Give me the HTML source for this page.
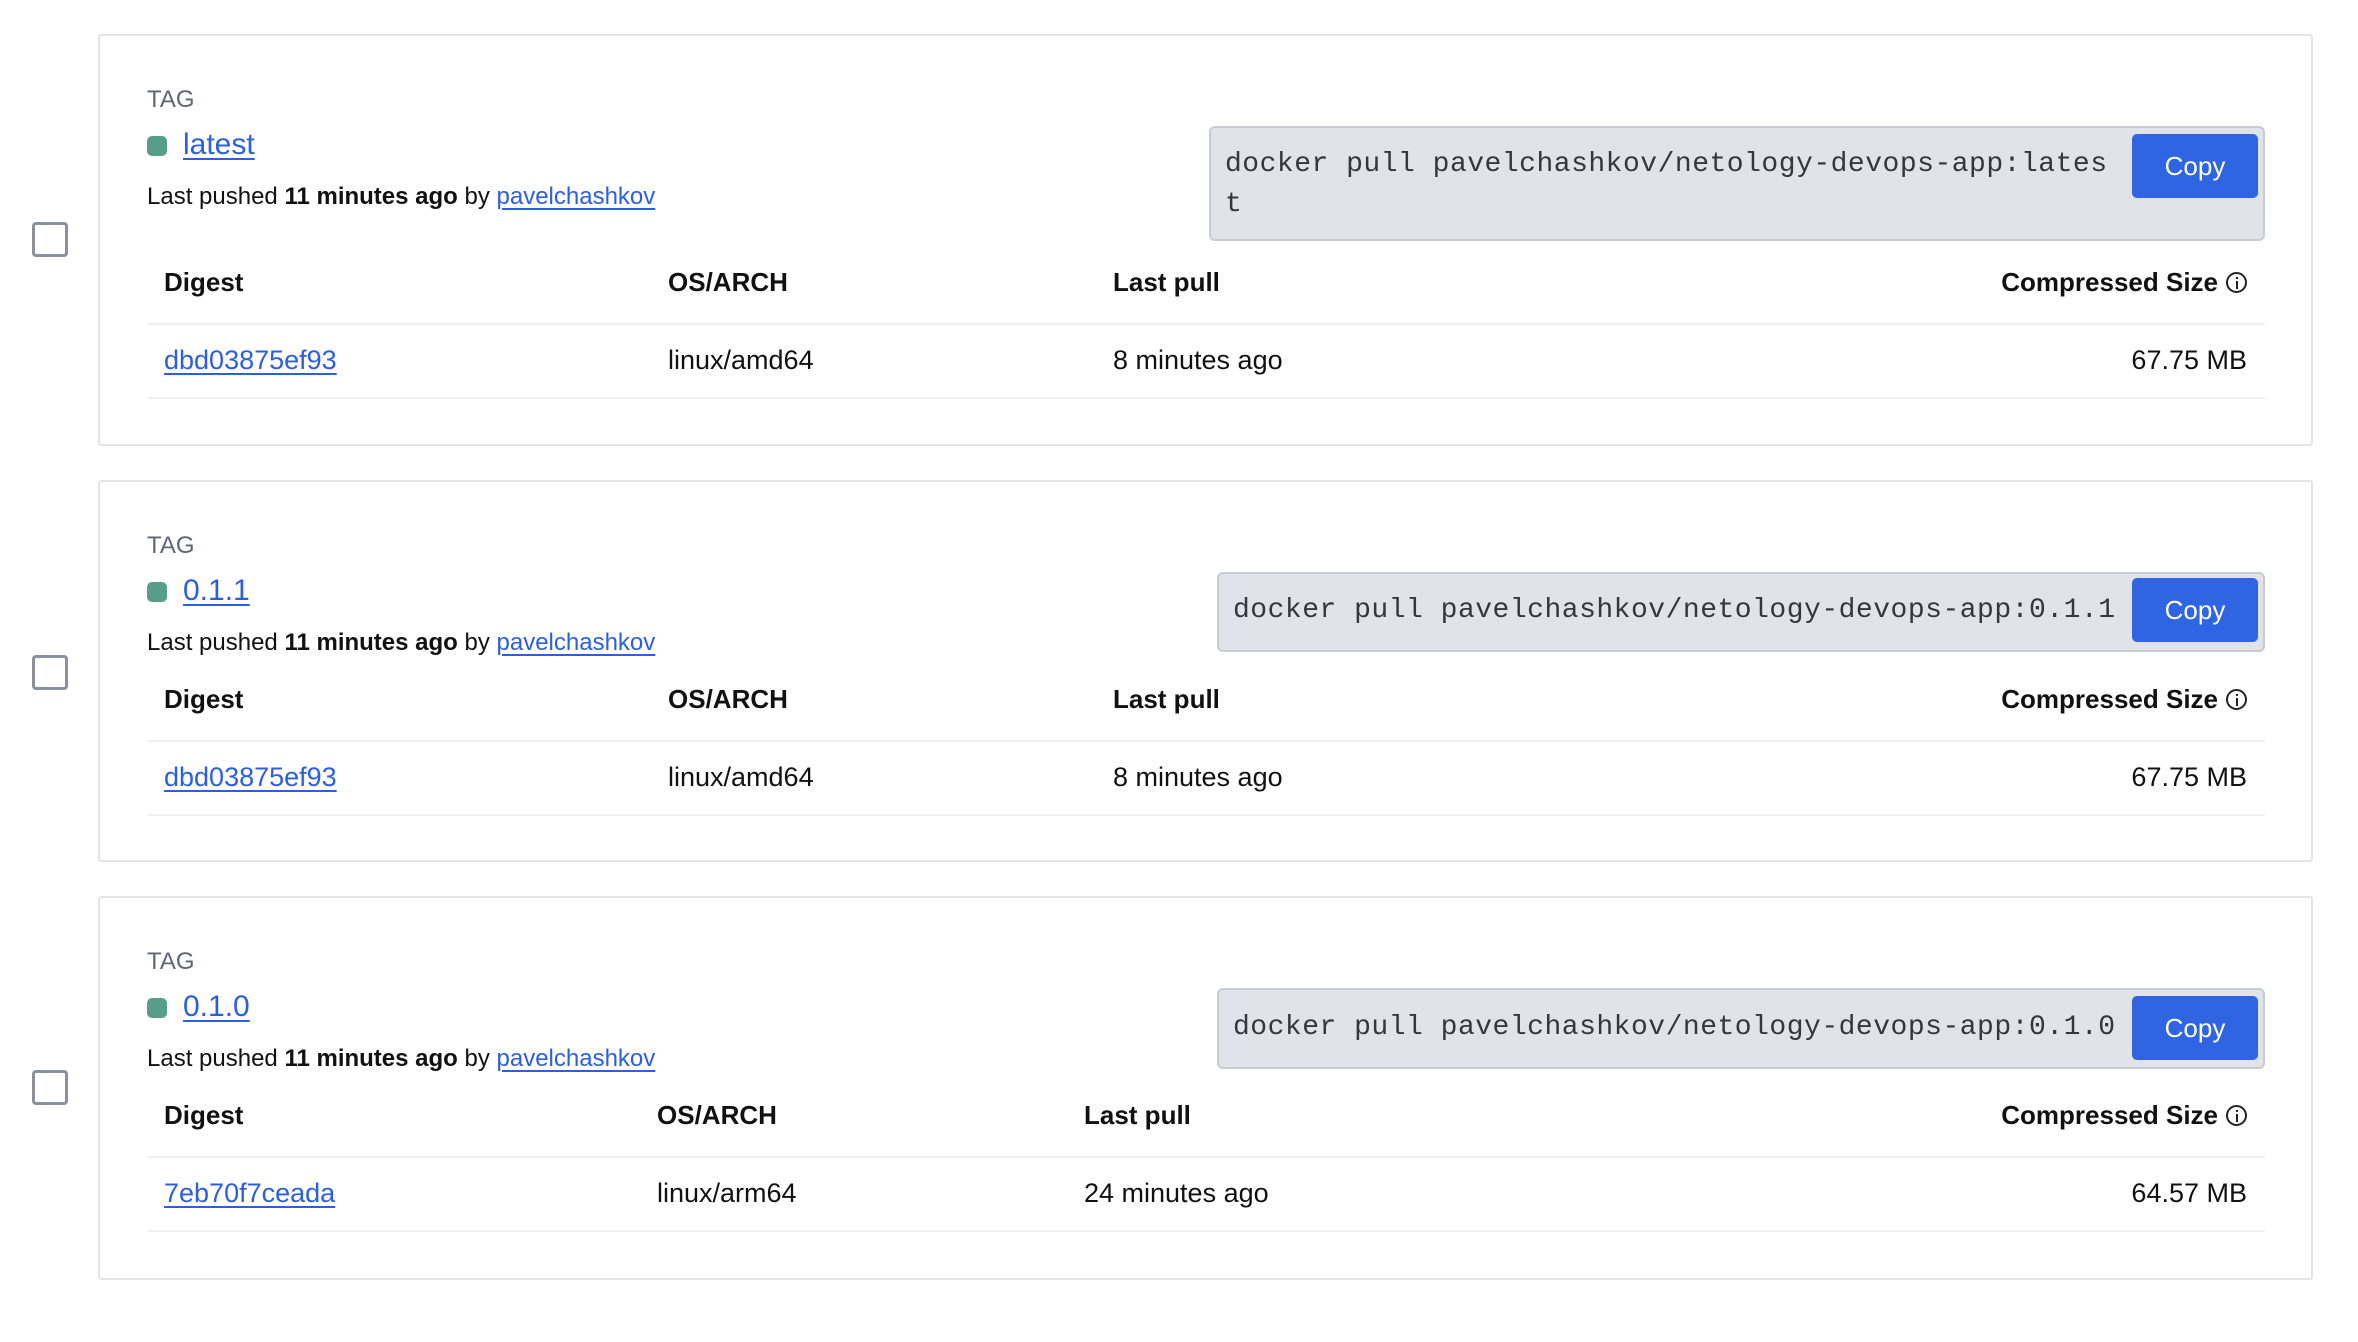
<!DOCTYPE html>
<html><head><meta charset="utf-8"><style>
*{margin:0;padding:0;box-sizing:border-box}
body{width:2358px;height:1342px;background:#fff;position:relative;overflow:hidden;font-family:"Liberation Sans",Arial,sans-serif;color:#111}
.card{position:absolute;left:98px;width:2215px;border:2px solid #e3e5e8;border-radius:3px;background:#fff}
.cb{position:absolute;left:32px;width:36px;height:35px;border:3px solid #8a919c;border-radius:4px}
.a{position:absolute;white-space:nowrap;line-height:1}
.tag{font-size:24px;color:#5f6672}
.dot{position:absolute;left:47px;width:20px;height:20px;border-radius:5px;background:#579e88}
.lnk{color:#2c5ee0;text-decoration:underline;text-decoration-thickness:2px;text-underline-offset:4px}
.tname{font-size:30px}
.lp{font-size:24px}
.lp b{font-weight:bold}
.code{position:absolute;background:#e1e3e8;border:2px solid #c8cbd2;border-radius:6px}
svg.ct{position:absolute;left:0;top:0;overflow:visible}
svg.ct text{font-family:"Liberation Mono",monospace;font-size:28px;fill:#33373f}
.copy{position:absolute;left:2032px;width:126px;height:64px;background:#2f64e3;border-radius:5px;color:#fff;font-size:26px;text-align:center;line-height:64px}
.h{font-size:26px;font-weight:bold}
.r{font-size:27px}
.line{position:absolute;left:48px;width:2117px;height:2px;background:#eeeff1}
.info{display:inline-block;width:21px;height:21px;border:2px solid #222;border-radius:50%;vertical-align:-2px;margin-left:8px;position:relative}
.info:before{content:"";position:absolute;left:7.5px;top:7px;width:2px;height:8px;background:#222}
.info:after{content:"";position:absolute;left:7.5px;top:3px;width:2px;height:2px;background:#222}
</style></head><body>

<div class="cb" style="top:222px"></div>
<div class="card" style="top:34px;height:412px">
 <div class="a tag" style="left:47px;top:52px">TAG</div>
 <div class="dot" style="top:100px"></div>
 <div class="a tname lnk" style="left:83px;top:94px">latest</div>
 <div class="a lp" style="left:47px;top:149px">Last pushed <b>11 minutes ago</b> by <span class="lnk">pavelchashkov</span></div>
 <div class="code" style="left:1109px;top:90px;width:1056px;height:115px"></div>
 <svg class="ct" width="2215" height="412"><text x="1125" y="135" textLength="882" lengthAdjust="spacing">docker pull pavelchashkov/netology-devops-app:lates</text><text x="1125" y="175">t</text></svg>
 <div class="copy" style="top:98px">Copy</div>
 <div class="a h" style="left:64px;top:233px">Digest</div>
 <div class="a h" style="left:568px;top:233px">OS/ARCH</div>
 <div class="a h" style="left:1013px;top:233px">Last pull</div>
 <div class="a h" style="right:64px;top:233px">Compressed Size<span class="info"></span></div>
 <div class="line" style="top:287px"></div>
 <div class="a r lnk" style="left:64px;top:311px">dbd03875ef93</div>
 <div class="a r" style="left:568px;top:311px">linux/amd64</div>
 <div class="a r" style="left:1013px;top:311px">8 minutes ago</div>
 <div class="a r" style="right:64px;top:311px">67.75 MB</div>
 <div class="line" style="top:361px"></div>
</div>

<div class="cb" style="top:655px"></div>
<div class="card" style="top:480px;height:382px">
 <div class="a tag" style="left:47px;top:52px">TAG</div>
 <div class="dot" style="top:100px"></div>
 <div class="a tname lnk" style="left:83px;top:94px">0.1.1</div>
 <div class="a lp" style="left:47px;top:149px">Last pushed <b>11 minutes ago</b> by <span class="lnk">pavelchashkov</span></div>
 <div class="code" style="left:1117px;top:90px;width:1048px;height:80px"></div>
 <svg class="ct" width="2215" height="382"><text x="1133" y="135" textLength="882" lengthAdjust="spacing">docker pull pavelchashkov/netology-devops-app:0.1.1</text></svg>
 <div class="copy" style="top:96px">Copy</div>
 <div class="a h" style="left:64px;top:204px">Digest</div>
 <div class="a h" style="left:568px;top:204px">OS/ARCH</div>
 <div class="a h" style="left:1013px;top:204px">Last pull</div>
 <div class="a h" style="right:64px;top:204px">Compressed Size<span class="info"></span></div>
 <div class="line" style="top:258px"></div>
 <div class="a r lnk" style="left:64px;top:282px">dbd03875ef93</div>
 <div class="a r" style="left:568px;top:282px">linux/amd64</div>
 <div class="a r" style="left:1013px;top:282px">8 minutes ago</div>
 <div class="a r" style="right:64px;top:282px">67.75 MB</div>
 <div class="line" style="top:332px"></div>
</div>

<div class="cb" style="top:1070px"></div>
<div class="card" style="top:896px;height:384px">
 <div class="a tag" style="left:47px;top:52px">TAG</div>
 <div class="dot" style="top:100px"></div>
 <div class="a tname lnk" style="left:83px;top:94px">0.1.0</div>
 <div class="a lp" style="left:47px;top:149px">Last pushed <b>11 minutes ago</b> by <span class="lnk">pavelchashkov</span></div>
 <div class="code" style="left:1117px;top:90px;width:1048px;height:81px"></div>
 <svg class="ct" width="2215" height="384"><text x="1133" y="136" textLength="882" lengthAdjust="spacing">docker pull pavelchashkov/netology-devops-app:0.1.0</text></svg>
 <div class="copy" style="top:98px">Copy</div>
 <div class="a h" style="left:64px;top:204px">Digest</div>
 <div class="a h" style="left:557px;top:204px">OS/ARCH</div>
 <div class="a h" style="left:984px;top:204px">Last pull</div>
 <div class="a h" style="right:64px;top:204px">Compressed Size<span class="info"></span></div>
 <div class="line" style="top:258px"></div>
 <div class="a r lnk" style="left:64px;top:282px">7eb70f7ceada</div>
 <div class="a r" style="left:557px;top:282px">linux/arm64</div>
 <div class="a r" style="left:984px;top:282px">24 minutes ago</div>
 <div class="a r" style="right:64px;top:282px">64.57 MB</div>
 <div class="line" style="top:332px"></div>
</div>

</body></html>
